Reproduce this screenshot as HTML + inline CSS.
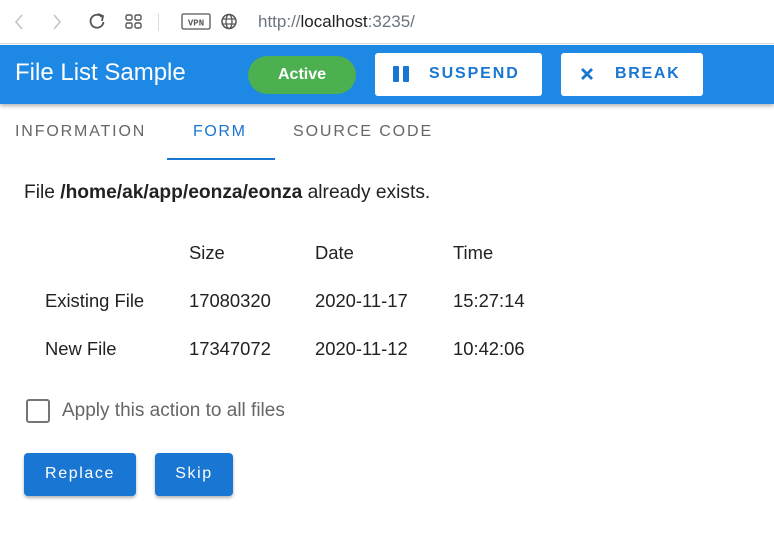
<!DOCTYPE html>
<html><head><style>
*{margin:0;padding:0;box-sizing:border-box}
body{width:774px;height:536px;background:#fff;font-family:"Liberation Sans",sans-serif;position:relative;overflow:hidden}
.a{position:absolute;white-space:nowrap}
.t{font-size:18.4px;color:#222}
</style></head><body>
<div class="a" style="left:0;top:0;width:774px;height:44px;background:#fff;border-bottom:1px solid #ddd"></div>
<svg class="a" style="left:0;top:0" width="250" height="44">
<path d="M22 15l-6 7 6 7" fill="none" stroke="#c4c4c4" stroke-width="1.6"/>
<path d="M54 15l6 7-6 7" fill="none" stroke="#c4c4c4" stroke-width="1.6"/>
<path d="M102 17a6.5 6.5 0 1 0 1.5 5" fill="none" stroke="#555" stroke-width="1.8"/>
<path d="M98 14l5 2-1 5" fill="none" stroke="#555" stroke-width="1.8"/>
<rect x="126" y="15" width="6" height="5" rx="1.5" fill="none" stroke="#555" stroke-width="1.4"/>
<rect x="135" y="15" width="6" height="5" rx="1.5" fill="none" stroke="#555" stroke-width="1.4"/>
<rect x="126" y="23" width="6" height="5" rx="1.5" fill="none" stroke="#555" stroke-width="1.4"/>
<rect x="135" y="23" width="6" height="5" rx="1.5" fill="none" stroke="#555" stroke-width="1.4"/>
<line x1="158.5" y1="13" x2="158.5" y2="31" stroke="#ddd"/>
<rect x="182" y="14" width="28" height="15" rx="1.5" fill="none" stroke="#555" stroke-width="1.3"/>
<text x="196" y="25.5" font-size="9" font-weight="bold" fill="#555" text-anchor="middle" font-family="Liberation Mono,monospace">VPN</text>
<circle cx="229" cy="21.5" r="7" fill="none" stroke="#555" stroke-width="1.5"/>
<ellipse cx="229" cy="21.5" rx="3" ry="7" fill="none" stroke="#555" stroke-width="1.3"/>
<line x1="222" y1="19" x2="236" y2="19" stroke="#555" stroke-width="1.2"/><line x1="222" y1="24" x2="236" y2="24" stroke="#555" stroke-width="1.2"/>
</svg>
<div class="a" style="top:12px;left:258px;font-size:17px;color:#6a7580">http://<span style="color:#222">localhost</span>:3235/</div>
<div class="a" style="left:0;top:45px;width:774px;height:59px;background:#1e88e5;box-shadow:0 2px 4px rgba(0,0,0,.3)"></div>
<div class="a" style="left:15px;top:59px;font-size:24px;color:#fff">File List Sample</div>
<div class="a" style="left:248px;top:56px;width:108px;height:38px;border-radius:19px;background:#4caf50;color:#fff;font-weight:bold;font-size:16px;text-align:center;line-height:38px">Active</div>
<div class="a" style="left:375px;top:53px;width:167px;height:43px;border-radius:3px;background:#fff"></div>
<div class="a" style="left:393px;top:66px;width:6px;height:16px;background:#1976d2;border-radius:1px"></div>
<div class="a" style="left:403px;top:66px;width:6px;height:16px;background:#1976d2;border-radius:1px"></div>
<div class="a" style="left:429px;top:65px;font-size:16px;font-weight:bold;color:#1976d2;letter-spacing:1.9px">SUSPEND</div>
<div class="a" style="left:561px;top:53px;width:142px;height:43px;border-radius:3px;background:#fff"></div>
<svg class="a" style="left:580px;top:67px" width="14" height="14"><path d="M2 2l10 10M12 2L2 12" stroke="#1976d2" stroke-width="2.8"/></svg>
<div class="a" style="left:615px;top:65px;font-size:16px;font-weight:bold;color:#1976d2;letter-spacing:1.7px">BREAK</div>
<div class="a" style="left:15px;top:123px;font-size:16px;color:#666;letter-spacing:1.85px">INFORMATION</div>
<div class="a" style="left:193px;top:123px;font-size:16px;color:#1976d2;letter-spacing:1.6px">FORM</div>
<div class="a" style="left:167px;top:158px;width:108px;height:2px;background:#1976d2"></div>
<div class="a" style="left:293px;top:123px;font-size:16px;color:#666;letter-spacing:1.9px">SOURCE CODE</div>
<div class="a" style="left:24px;top:182px;font-size:19.2px;color:#222">File <b>/home/ak/app/eonza/eonza</b> already exists.</div>
<div class="a t" style="left:189px;top:242px">Size</div>
<div class="a t" style="left:315px;top:242px">Date</div>
<div class="a t" style="left:453px;top:242px">Time</div>
<div class="a t" style="left:45px;top:290px">Existing File</div>
<div class="a t" style="left:189px;top:290px">17080320</div>
<div class="a t" style="left:315px;top:290px">2020-11-17</div>
<div class="a t" style="left:453px;top:290px">15:27:14</div>
<div class="a t" style="left:45px;top:338px">New File</div>
<div class="a t" style="left:189px;top:338px">17347072</div>
<div class="a t" style="left:315px;top:338px">2020-11-12</div>
<div class="a t" style="left:453px;top:338px">10:42:06</div>
<div class="a" style="left:26px;top:399px;width:24px;height:24px;border:2.5px solid #757575;border-radius:3px"></div>
<div class="a" style="left:62px;top:400px;font-size:19px;color:#666">Apply this action to all files</div>
<div class="a" style="left:24px;top:453px;width:112px;height:43px;border-radius:4px;background:#1976d2;box-shadow:0 2px 3px rgba(0,0,0,.3);color:#fff;font-size:16px;letter-spacing:1.6px;text-align:center;line-height:41px">Replace</div>
<div class="a" style="left:155px;top:453px;width:78px;height:43px;border-radius:4px;background:#1976d2;box-shadow:0 2px 3px rgba(0,0,0,.3);color:#fff;font-size:16px;letter-spacing:1.6px;text-align:center;line-height:41px">Skip</div>
</body></html>
